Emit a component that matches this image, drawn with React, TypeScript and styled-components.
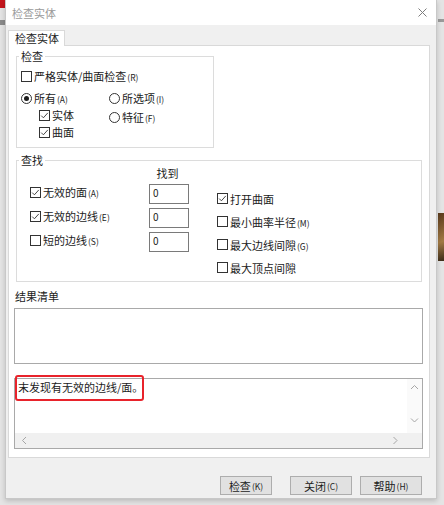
import styled, { createGlobalStyle } from "styled-components";

const GlobalStyle = createGlobalStyle`
  html, body {
    margin: 0;
    padding: 0;
  }
  body {
    font-family: "Noto Sans CJK SC", "Microsoft YaHei", sans-serif;
    font-size: 11px;
    color: #1b1b1b;
  }
  * {
    box-sizing: border-box;
  }
`;

type Opt = {
    label: string;
    hot?: string;
    checked?: boolean;
};

const checkOptions: Opt[] = [
    { label: "无效的面", hot: "(A)", checked: true },
    { label: "无效的边线", hot: "(E)", checked: true },
    { label: "短的边线", hot: "(S)" },
];

const extraOptions: Opt[] = [
    { label: "打开曲面", checked: true },
    { label: "最小曲率半径", hot: "(M)" },
    { label: "最大边线间隙", hot: "(G)" },
    { label: "最大顶点间隙" },
];

function CheckBox({ checked }: { checked?: boolean }) {
    return (
        <Box>
            {checked && (
                <svg width="9" height="9" viewBox="0 0 9 9">
                    <polyline points="1.2,4.6 3.4,6.8 7.8,1.9" fill="none" stroke="#333" strokeWidth="0.9" />
                </svg>
            )}
        </Box>
    );
}

function Radio({ checked }: { checked?: boolean }) {
    return <Circle>{checked && <Dot />}</Circle>;
}

function Label({ label, hot }: Opt) {
    return (
        <span>
            {label}
            {hot && <Hot>{hot}</Hot>}
        </span>
    );
}

function Chevron({ dir }: { dir: "up" | "down" | "left" | "right" }) {
    const pts = {
        up: "1,5 4.5,1.5 8,5",
        down: "1,1.5 4.5,5 8,1.5",
        left: "5,1 1.5,4.5 5,8",
        right: "1.5,1 5,4.5 1.5,8",
    }[dir];
    const vertical = dir === "up" || dir === "down";
    return (
        <svg width={vertical ? 9 : 7} height={vertical ? 7 : 9} viewBox={vertical ? "0 0 9 7" : "0 0 7 9"}>
            <polyline points={pts} fill="none" stroke="#a6a6a6" strokeWidth="1" />
        </svg>
    );
}

export default function App() {
    return (
        <Screen>
            <GlobalStyle />
            <Dialog>
                <TitleBar>
                    <span>检查实体</span>
                    <svg width="9" height="9" viewBox="0 0 9 9">
                        <path d="M0.5 0.5 L8.5 8.5 M8.5 0.5 L0.5 8.5" stroke="#7d7d7d" strokeWidth="1" />
                    </svg>
                </TitleBar>

                <Body>
                    <TabStrip>
                        <Tab>检查实体</Tab>
                    </TabStrip>

                    <Panel>
                        {/* 检查 */}
                        <Group $width={198}>
                            <Legend>检查</Legend>
                            <CheckContent>
                                <Row>
                                    <CheckBox />
                                    <Label label="严格实体/曲面检查" hot="(R)" />
                                </Row>
                                <Scope>
                                    <Column $gap={1}>
                                        <Row>
                                            <Radio checked />
                                            <Label label="所有" hot="(A)" />
                                        </Row>
                                        <Row $indent={18}>
                                            <CheckBox checked />
                                            <Label label="实体" />
                                        </Row>
                                        <Row $indent={18}>
                                            <CheckBox checked />
                                            <Label label="曲面" />
                                        </Row>
                                    </Column>
                                    <Column $gap={3}>
                                        <Row>
                                            <Radio />
                                            <Label label="所选项" hot="(I)" />
                                        </Row>
                                        <Row>
                                            <Radio />
                                            <Label label="特征" hot="(F)" />
                                        </Row>
                                    </Column>
                                </Scope>
                            </CheckContent>
                        </Group>

                        {/* 查找 */}
                        <Group $top={5} $right={1}>
                            <Legend>查找</Legend>
                            <FindContent>
                                <FindGrid>
                                    <span />
                                    <FoundHead>找到</FoundHead>
                                    {checkOptions.map((o) => (
                                        <FindRow key={o.label}>
                                            <Row>
                                                <CheckBox checked={o.checked} />
                                                <Label label={o.label} hot={o.hot} />
                                            </Row>
                                            <CountBox>0</CountBox>
                                        </FindRow>
                                    ))}
                                </FindGrid>
                                <ExtraList>
                                    {extraOptions.map((o) => (
                                        <ExtraRow key={o.label}>
                                            <CheckBox checked={o.checked} />
                                            <Label label={o.label} hot={o.hot} />
                                        </ExtraRow>
                                    ))}
                                </ExtraList>
                            </FindContent>
                        </Group>

                        <SectionLabel>结果清单</SectionLabel>
                        <ListBox />

                        <MessageWrap>
                            <MessageBox>
                                <MessageText>末发现有无效的边线/面。</MessageText>
                                <VScroll>
                                    <Chevron dir="up" />
                                    <Chevron dir="down" />
                                </VScroll>
                                <HScroll>
                                    <Chevron dir="left" />
                                    <Chevron dir="right" />
                                </HScroll>
                                <Corner />
                            </MessageBox>
                            <Highlight />
                        </MessageWrap>
                    </Panel>

                    <ButtonRow>
                        <Button $w={52}>
                            检查<Hot>(K)</Hot>
                        </Button>
                        <Button $w={62}>
                            关闭<Hot>(C)</Hot>
                        </Button>
                        <Button $w={62}>
                            帮助<Hot>(H)</Hot>
                        </Button>
                    </ButtonRow>
                </Body>
            </Dialog>
        </Screen>
    );
}

// style
const Screen = styled.div`
    width: 444px;
    height: 505px;
    overflow: hidden;
    padding-left: 5px;
    background:
        linear-gradient(#c4161c, #c4161c) 0 0 / 5px 8px no-repeat,
        linear-gradient(#8a8a8a, #8a8a8a) 0 20px / 5px 5px no-repeat,
        linear-gradient(160deg, #5a3a1c, #a27a44 60%, #3a2a18) 438px 213px / 6px 48px no-repeat,
        linear-gradient(#9a9a9a, #9a9a9a) 438px 19px / 6px 3px no-repeat,
        #e4e4e4;
`;

const Dialog = styled.div`
    width: 432px;
    height: 499px;
    background: #f0f0f0;
    border: 1px solid #c8c8c8;
    border-top: none;
    box-shadow: 0 2px 5px rgba(0, 0, 0, 0.18);
    display: flex;
    flex-direction: column;
`;

const TitleBar = styled.div`
    flex: none;
    height: 25px;
    background: #fff;
    display: flex;
    align-items: center;
    justify-content: space-between;
    padding: 0 9px 0 6px;
    color: #9a9a9a;
    font-size: 11px;
`;

const Body = styled.div`
    flex: 1;
    display: flex;
    flex-direction: column;
    padding: 5px 6px 0 2px;
`;

const TabStrip = styled.div`
    display: flex;
`;

const Tab = styled.div`
    height: 16px;
    padding: 0 5px 0 6px;
    line-height: 15px;
    background: #fff;
    border: 1px solid #d9d9d9;
    border-bottom: none;
    margin-bottom: -1px;
    position: relative;
    z-index: 1;
`;

const Panel = styled.div`
    display: flex;
    flex-direction: column;
    background: #fff;
    border: 1px solid #d9d9d9;
    padding: 3px 6px 8px 5px;
`;

const Group = styled.fieldset<{ $width?: number; $top?: number; $right?: number }>`
    margin: ${(p) => p.$top ?? 0}px ${(p) => p.$right ?? 0}px 0 2px;
    padding: 0;
    min-width: 0;
    width: ${(p) => (p.$width ? `${p.$width}px` : "auto")};
    border: 1px solid #dcdcdc;
`;

const Legend = styled.legend`
    margin-left: 2px;
    padding: 0 2px;
    line-height: 14px;
    font-size: 11px;
`;

const CheckContent = styled.div`
    padding: 5px 0 7px 4px;
`;

const Row = styled.div<{ $indent?: number }>`
    display: flex;
    align-items: center;
    gap: 2px;
    height: 16px;
    padding-left: ${(p) => p.$indent ?? 0}px;
    white-space: nowrap;
`;

const Scope = styled.div`
    display: grid;
    grid-template-columns: 88px auto;
    margin-top: 6px;
`;

const Column = styled.div<{ $gap: number }>`
    display: flex;
    flex-direction: column;
    gap: ${(p) => p.$gap}px;
`;

const Hot = styled.span`
    font-size: 8.5px;
    margin-left: 1px;
`;

const Box = styled.span`
    flex: none;
    width: 11px;
    height: 11px;
    border: 1px solid #333;
    background: #fff;
    display: inline-flex;
    align-items: center;
    justify-content: center;
`;

const Circle = styled.span`
    flex: none;
    width: 11px;
    height: 11px;
    border: 1px solid #333;
    border-radius: 50%;
    background: #fff;
    display: inline-flex;
    align-items: center;
    justify-content: center;
`;

const Dot = styled.span`
    width: 5px;
    height: 5px;
    border-radius: 50%;
    background: #1b1b1b;
`;

const FindContent = styled.div`
    display: flex;
    padding: 0 0 2px 13px;
`;

const FindGrid = styled.div`
    display: grid;
    grid-template-columns: 119px 40px;
    grid-auto-rows: auto;
    row-gap: 4px;
    align-content: start;
    margin-top: -1px;
`;

const FoundHead = styled.div`
    line-height: 14px;
    text-align: center;
    margin-left: -3px;
`;

const FindRow = styled.div`
    display: contents;
`;

const CountBox = styled.div`
    height: 20px;
    border: 1px solid #7a7a7a;
    padding: 1px 0 0 3px;
    font-size: 10px;
    line-height: 14px;
    background: #fff;
    align-self: center;
`;

const ExtraList = styled.div`
    display: flex;
    flex-direction: column;
    margin-left: 28px;
    padding-top: 20px;
`;

const ExtraRow = styled.div`
    display: flex;
    align-items: center;
    gap: 2px;
    height: 23px;
    white-space: nowrap;
`;

const SectionLabel = styled.div`
    margin-top: 7px;
    line-height: 14px;
    padding-left: 1px;
`;

const ListBox = styled.div`
    margin-top: 5px;
    height: 56px;
    border: 1px solid #a9a9a9;
    background: #fff;
`;

const MessageWrap = styled.div`
    position: relative;
    margin-top: 14px;
`;

const MessageBox = styled.div`
    height: 71px;
    border: 1px solid #a9a9a9;
    background: #fff;
    display: grid;
    grid-template-columns: 1fr 15px;
    grid-template-rows: 1fr 15px;
`;

const MessageText = styled.div`
    padding: 1px 0 0 3px;
    line-height: 14px;
    font-size: 11px;
`;

const VScroll = styled.div`
    background: #fafafa;
    display: flex;
    flex-direction: column;
    align-items: center;
    justify-content: space-between;
    padding: 5px 0 9px;
`;

const HScroll = styled.div`
    background: #f0f0f0;
    display: flex;
    align-items: center;
    justify-content: space-between;
    padding: 0 8px 0 6px;
`;

const Corner = styled.div`
    background: #f0f0f0;
`;

const Highlight = styled.div`
    position: absolute;
    left: 1px;
    top: -3px;
    width: 129px;
    height: 26px;
    border: 2px solid #e8232b;
    border-radius: 3px;
`;

const ButtonRow = styled.div`
    display: flex;
    justify-content: flex-end;
    gap: 8px;
    margin-top: 18px;
    padding-right: 8px;
`;

const Button = styled.div<{ $w: number }>`
    width: ${(p) => p.$w}px;
    height: 19px;
    background: #e1e1e1;
    border: 1px solid #adadad;
    display: flex;
    align-items: center;
    justify-content: center;
    font-size: 11px;
    &:first-child {
        margin-right: 10px;
    }
`;
